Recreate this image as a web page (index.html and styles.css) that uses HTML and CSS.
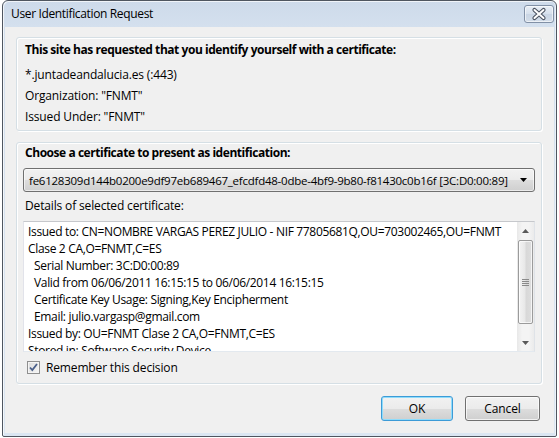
FILE: index.html
```html
<!DOCTYPE html>
<html>
<head>
<meta charset="utf-8">
<link rel="stylesheet" href="styles.css">
</head>
<body>
<div class="window">
  <div class="titlebar">
    <span class="title">User Identification Request</span>
    <div class="close">
      <svg width="30" height="18" viewBox="0 0 30 18">
        <path d="M10.5 5 L19.5 13 M19.5 5 L10.5 13" stroke="#4a5260" stroke-width="4.2" stroke-linecap="round" fill="none"/>
        <path d="M10.5 5 L19.5 13 M19.5 5 L10.5 13" stroke="#ffffff" stroke-width="2" stroke-linecap="round" fill="none"/>
      </svg>
    </div>
  </div>
  <div class="client">
    <div class="group g1">
      <div class="line bold">This site has requested that you identify yourself with a certificate:</div>
      <div class="line">*.juntadeandalucia.es (:443)</div>
      <div class="line">Organization: "FNMT"</div>
      <div class="line">Issued Under: "FNMT"</div>
    </div>
    <div class="group g2">
      <div class="line bold ind">Choose a certificate to present as identification:</div>
      <div class="combo">
        <span class="combo-text">fe6128309d144b0200e9df97eb689467_efcdfd48-0dbe-4bf9-9b80-f81430c0b16f [3C:D0:00:89]</span>
        <svg class="combo-arrow" width="8" height="5" viewBox="0 0 8 5"><path d="M0 0 H7 L3.5 4 Z" fill="#000"/></svg>
      </div>
      <div class="line ind label">Details of selected certificate:</div>
      <div class="details">
        <div class="details-text">
          <div class="dl">Issued to: CN=NOMBRE VARGAS PEREZ JULIO - NIF 77805681Q,OU=703002465,OU=FNMT</div>
          <div class="dl">Clase 2 CA,O=FNMT,C=ES</div>
          <div class="dl sub">Serial Number: 3C:D0:00:89</div>
          <div class="dl sub">Valid from 06/06/2011 16:15:15 to 06/06/2014 16:15:15</div>
          <div class="dl sub">Certificate Key Usage: Signing,Key Encipherment</div>
          <div class="dl sub">Email: julio.vargasp@gmail.com</div>
          <div class="dl">Issued by: OU=FNMT Clase 2 CA,O=FNMT,C=ES</div>
          <div class="dl">Stored in: Software Security Device</div>
        </div>
        <div class="scrollbar">
          <div class="sb-btn"><svg width="7" height="4" viewBox="0 0 7 4"><path d="M3.5 0 L7 4 H0 Z" fill="#5a5a5a"/></svg></div>
          <div class="sb-track">
            <div class="sb-thumb">
              <svg width="7" height="7" viewBox="0 0 7 7"><path d="M0 0.5 H7 M0 2.5 H7 M0 4.5 H7 M0 6.5 H7" stroke="#8a8a8a" stroke-width="1"/></svg>
            </div>
          </div>
          <div class="sb-btn"><svg width="7" height="4" viewBox="0 0 7 4"><path d="M0 0 H7 L3.5 4 Z" fill="#5a5a5a"/></svg></div>
        </div>
      </div>
      <div class="check">
        <span class="box"><svg width="11" height="11" viewBox="0 0 11 11"><path d="M2 5.5 L4.3 8 L9 2" stroke="#4a5f8a" stroke-width="1.8" fill="none"/></svg></span>
        <span>Remember this decision</span>
      </div>
    </div>
    <div class="buttons">
      <div class="btn default">OK</div>
      <div class="btn cancel">Cancel</div>
    </div>
  </div>
</div>
</body>
</html>
```
FILE: styles.css
```css
html, body {
  margin: 0;
  padding: 0;
}
body {
  width: 559px;
  height: 438px;
  overflow: hidden;
  background: #ffffff;
  font-family: "Open Sans", "Noto Sans", sans-serif;
  font-size: 12px;
  color: #000;
}
.window {
  margin-left: 2px;
  width: 555px;
  height: 437px;
  box-sizing: border-box;
  border: 1px solid #4f5660;
  border-radius: 6px 6px 2px 2px;
  background: linear-gradient(to bottom, #cddaea 0px, #d4e0ee 26px, #dbe6f2 100%);
  padding: 0 2px 3px 2px;
  display: flex;
  flex-direction: column;
  box-shadow: inset 1px 1px 0 rgba(255,255,255,0.7), inset -1px 0 0 rgba(255,255,255,0.5);
}
.titlebar {
  height: 26px;
  flex: none;
  display: flex;
  align-items: flex-start;
  justify-content: space-between;
}
.title {
  padding-left: 6px;
  line-height: 26px;
  color: #000;
  letter-spacing: -0.35px;
}
.close {
  margin-top: 4px;
  width: 30px;
  height: 18px;
  box-sizing: border-box;
  border: 1px solid #8190a6;
  border-radius: 3px;
  background: linear-gradient(to bottom, #e8eef6 0%, #d6e0ec 50%, #c9d5e4 51%, #d3dde9 100%);
  box-shadow: inset 0 0 0 1px rgba(255,255,255,0.6);
  position: relative;
}
.close svg {
  position: absolute;
  left: -1px;
  top: -1px;
}
.client {
  flex: 1;
  background: #f0f0f0;
  padding: 10px 12px 0 11px;
  display: flex;
  flex-direction: column;
}
.group {
  border: 1px solid #d5dfe5;
  border-radius: 3px;
  box-shadow: inset 1px 1px 0 #ffffff, 1px 1px 0 #ffffff;
}
.g1 {
  height: 94px;
  box-sizing: border-box;
  padding: 1px 8px 0 8px;
}
.g1 .line {
  line-height: 21px;
}
.g1 .bold {
  margin-bottom: 4px;
}
.line {
  white-space: nowrap;
  letter-spacing: -0.15px;
}
.bold {
  font-weight: bold;
  letter-spacing: -0.45px;
}
.g2 {
  margin-top: 11px;
  height: 242px;
  box-sizing: border-box;
  padding: 0 6px 0 6px;
}
.g2 .line {
  line-height: 20px;
}
.ind {
  padding-left: 2px;
}
.combo {
  margin-top: 5px;
  height: 24px;
  box-sizing: border-box;
  border: 1px solid #707070;
  border-radius: 3px;
  background: linear-gradient(to bottom, #f2f2f2 0%, #ebebeb 50%, #dddddd 51%, #cfcfcf 100%);
  box-shadow: inset 0 0 0 1px rgba(255,255,255,0.6);
  display: flex;
  align-items: center;
  justify-content: space-between;
  padding: 0 6px 0 5px;
}
.combo-text {
  white-space: nowrap;
  font-size: 11.5px;
  letter-spacing: -0.24px;
}
.combo-arrow {
  flex: none;
}
.label {
  margin-top: 4px;
}
.details {
  margin-top: 5px;
  height: 131px;
  box-sizing: border-box;
  border: 1px solid;
  border-color: #c6c8cc #dfe3e8 #e3e9ef #e2e3ea;
  background: #fff;
  display: flex;
  overflow: hidden;
}
.details-text {
  flex: 1;
  padding: 1px 0 0 4px;
  overflow: hidden;
  min-width: 0;
}
.dl {
  line-height: 17px;
  white-space: nowrap;
  letter-spacing: -0.33px;
}
.dl.sub {
  padding-left: 6px;
}
.scrollbar {
  width: 17px;
  flex: none;
  display: flex;
  flex-direction: column;
  background: linear-gradient(to right, #e8e8e8, #f4f4f4 30%, #f4f4f4 70%, #ebebeb);
}
.sb-btn {
  height: 17px;
  flex: none;
  display: flex;
  align-items: center;
  justify-content: center;
}
.sb-track {
  flex: 1;
  padding: 1px 1px 0 1px;
}
.sb-thumb {
  height: 84px;
  box-sizing: border-box;
  border: 1px solid #9b9b9b;
  border-radius: 2px;
  background: linear-gradient(to right, #f3f3f3, #e8e8e8 45%, #d8d8d8 55%, #dedede);
  box-shadow: inset 0 0 0 1px rgba(255,255,255,0.7);
  display: flex;
  align-items: center;
  justify-content: center;
}
.check {
  margin-top: 5px;
  height: 20px;
  display: flex;
  align-items: center;
  padding-left: 4px;
  letter-spacing: -0.15px;
}
.box {
  width: 13px;
  height: 13px;
  box-sizing: border-box;
  border: 1px solid #8f8f8f;
  background: linear-gradient(135deg, #dcdcdc, #f6f6f6);
  box-shadow: inset 0 0 0 1px #f4f4f4;
  margin-right: 6px;
  display: flex;
  align-items: center;
  justify-content: center;
}
.buttons {
  margin-top: 12px;
  display: flex;
  justify-content: flex-end;
  gap: 12px;
  margin-right: 2px;
}
.btn {
  height: 25px;
  box-sizing: border-box;
  border: 1px solid #707070;
  border-radius: 3px;
  background: linear-gradient(to bottom, #f2f2f2 0%, #ebebeb 50%, #dddddd 51%, #cfcfcf 100%);
  box-shadow: inset 0 0 0 1px rgba(255,255,255,0.7);
  display: flex;
  align-items: center;
  justify-content: center;
  letter-spacing: -0.1px;
}
.btn.default {
  width: 72px;
  border-color: #3c9bd7;
  box-shadow: inset 0 0 0 1px #8fdcfb;
}
.btn.cancel {
  width: 75px;
}
```
